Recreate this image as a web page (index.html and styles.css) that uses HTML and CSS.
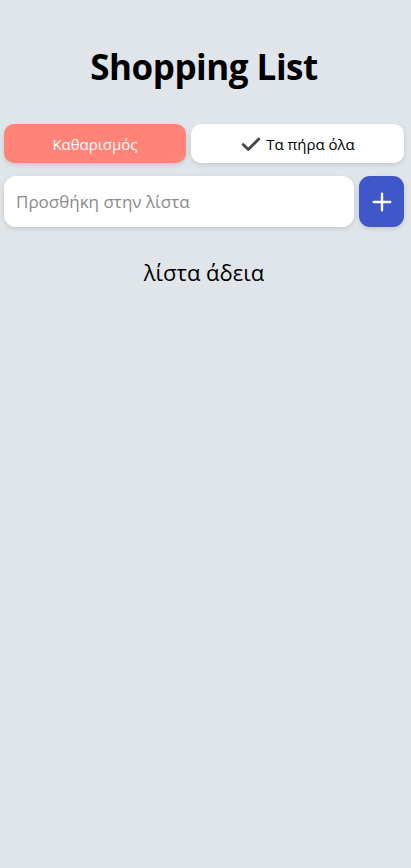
FILE: index.html
```html
<!DOCTYPE html>
<html lang="el">
<head>
<meta charset="utf-8">
<title>Shopping List</title>
<link rel="stylesheet" href="styles.css">
</head>
<body>
<main class="app">
  <h1 class="title">Shopping List</h1>
  <div class="actions">
    <button class="btn btn-clear">Καθαρισμός</button>
    <button class="btn btn-all">
      <svg class="check" viewBox="0 0 24 24" width="22" height="22" aria-hidden="true"><path d="M3.5 12.5l5.5 5.5L20.5 6.5" fill="none" stroke="#444" stroke-width="3" stroke-linecap="round" stroke-linejoin="round"/></svg>
      <span>Τα πήρα όλα</span>
    </button>
  </div>
  <form class="add-row">
    <input class="add-input" type="text" placeholder="Προσθήκη στην λίστα">
    <button class="add-btn" type="button" aria-label="Προσθήκη">
      <svg viewBox="0 0 24 24" width="22" height="22" aria-hidden="true"><path d="M12 3v18M3 12h18" stroke="#fff" stroke-width="2.6" stroke-linecap="round"/></svg>
    </button>
  </form>
  <p class="empty">λίστα άδεια</p>
</main>
</body>
</html>
```
FILE: styles.css
```css
html, body {
  margin: 0;
  padding: 0;
  background: #dfe5e9;
  font-family: "Open Sans", "Noto Sans", sans-serif;
  color: #000;
}
.app {
  padding: 0 7px 0 4px;
}
.title {
  margin: 0;
  padding-top: 44px;
  text-align: center;
  font-size: 35px;
  font-weight: 700;
  line-height: 46px;
  letter-spacing: -0.5px;
}
.actions {
  display: flex;
  gap: 5px;
  margin-top: 34px;
}
.btn {
  height: 39px;
  border: none;
  border-radius: 10px;
  font-family: inherit;
  font-size: 15px;
  display: flex;
  align-items: center;
  justify-content: center;
  gap: 4px;
  box-shadow: 0 2px 5px rgba(0,0,0,0.12);
  padding: 0;
}
.btn-clear {
  flex: 0 0 182px;
  background: #ff8376;
  color: #fff;
}
.btn-all {
  flex: 1;
  background: #fff;
  color: #000;
}
.add-row {
  display: flex;
  gap: 5px;
  margin: 13px 0 0;
}
.add-input {
  flex: 1;
  min-width: 0;
  height: 51px;
  box-sizing: border-box;
  border: none;
  border-radius: 12px;
  background: #fff;
  padding: 0 12px;
  font-family: inherit;
  font-size: 17px;
  box-shadow: 0 2px 5px rgba(0,0,0,0.12);
  outline: none;
}
.add-input::placeholder {
  color: #8a8a8a;
}
.add-btn {
  flex: 0 0 45px;
  height: 51px;
  border: none;
  border-radius: 11px;
  background: #3f57c9;
  display: flex;
  align-items: center;
  justify-content: center;
  padding: 0;
  box-shadow: 0 2px 5px rgba(0,0,0,0.12);
}
.empty {
  margin: 30px 0 0;
  text-align: center;
  font-size: 22px;
}
```
